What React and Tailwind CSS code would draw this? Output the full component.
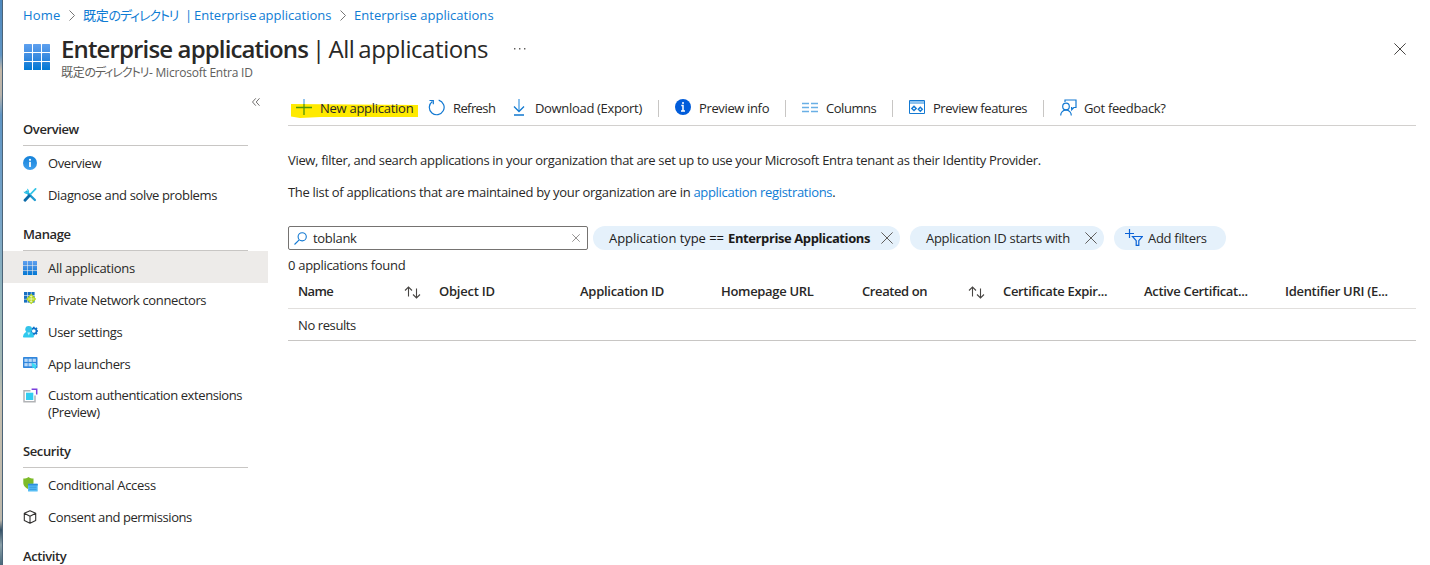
import React from "react";

const Grid = ({ size, id, className = "" }) => (
  <svg width={size} height={size} viewBox="0 0 26 26" className={className}>
    <defs>
      <linearGradient id={id} x1="0" y1="0" x2="0" y2="26" gradientUnits="userSpaceOnUse">
        <stop offset="0" stopColor="#5ea0ef" />
        <stop offset=".5" stopColor="#3a8be0" />
        <stop offset="1" stopColor="#0078d4" />
      </linearGradient>
    </defs>
    {[0, 9, 18].map((y) =>
      [0, 9, 18].map((x) => <rect key={x + "-" + y} x={x} y={y} width="8" height="8" rx=".5" fill={`url(#${id})`} />)
    )}
  </svg>
);

const InfoIcon = () => (
  <svg width="14" height="14" viewBox="0 0 14 14" className="-mt-px">
    <defs>
      <linearGradient id="info" x1="0" y1="0" x2="0" y2="1">
        <stop offset="0" stopColor="#1581d8" />
        <stop offset="1" stopColor="#3fa0ee" />
      </linearGradient>
    </defs>
    <circle cx="7" cy="7" r="7" fill="url(#info)" />
    <rect x="6.1" y="5.7" width="1.8" height="5.4" rx=".6" fill="#fff" />
    <circle cx="7" cy="3.8" r="1.1" fill="#fff" />
  </svg>
);

const ToolsIcon = () => (
  <svg width="14" height="14" viewBox="0 0 14 14" fill="none">
    <path d="M3.5 3.8 11.9 12" stroke="#1f9ad0" strokeWidth="2.4" strokeLinecap="round" />
    <path d="M3.9 0.6A3.300 3.300 0 0 1 5.8 5.200 3.300 3.300 0 0 1 .5 3.5L2.8 4.2 4.5 2.800Z" fill="#32c5e8" />
    <path d="M12.6 .9 6.6 7.1" stroke="#32c5e8" strokeWidth="1.7" strokeLinecap="round" />
    <path d="M6.2 7.700 2 12.2" stroke="#0a6aa8" strokeWidth="2.8" strokeLinecap="round" />
  </svg>
);

const ConnectorIcon = () => (
  <svg width="14" height="14" viewBox="0 0 14 14" className="-mt-0.5">
    {[0, 3.7, 7.4].map((y) => [1, 4.7, 8.4].map((x) => <rect key={x + "-" + y} x={x} y={y} width="3.200" height="3.200" fill="#176fc1" />))}
    <path d="M8.2 1.800 13.2 7 8.2 12.2 3.200 7Z" fill="#b4d81e" />
    <path d="M8.2 3.8v6.4M5.1 7h6.2M7.2 5 8.2 3.8 9.2 5M7.2 9l1 1.2 1-1.2" stroke="#fff" strokeWidth=".6" fill="none" />
  </svg>
);

const UserIcon = () => (
  <svg width="15" height="14" viewBox="0 0 15 14" className="-mt-px">
    <circle cx="10.8" cy="6" r="2.7" fill="none" stroke="#1071c8" strokeWidth="1.7" />
    <path d="M10.8 1.7v1.5M10.8 8.8v1.5M13.5 6H15M13 3.8l1-.9M13 8.2l1 .9" stroke="#1071c8" strokeWidth="1.7" />
    <path d="M0 11.6C.4 8.7 2.3 6.6 5.7 6.6s5.1 2.3 5.2 5c0 .7-.5 1-1.1 1H1C.3 12.600 0 12.200 0 11.600Z" fill="#30c9ee" />
    <circle cx="5.7" cy="4.3" r="3.4" fill="#34c3e9" />
    <path d="M4.300 7.500H7.200L5.800 10.500Z" fill="#b9f1fb" />
  </svg>
);

const LauncherIcon = () => (
  <svg width="15" height="13" viewBox="0 0 15 13" className="-mt-0.5">
    <rect width="14.500" height="11" rx=".8" fill="#3186dc" />
    {[1.7, 6.1].map((y) => [1.4, 5.5, 9.600].map((x) => <rect key={x + "-" + y} x={x} y={y} width="3.300" height="3.200" fill="#b9d9f8" />))}
    <path d="M8.8 5.600 14.600 9.100 12.500 9.600 13.300 12 11.900 12.500 10.900 10.200 9.500 11.500Z" fill="#3bdcf5" />
  </svg>
);

const ExtensionIcon = () => (
  <svg width="15" height="15" viewBox="0 0 15 15" fill="none">
    <path d="M7.500 2.700H1v11h11V7.500" stroke="#b1b3b6" strokeWidth="1.500" />
    <rect x="3" y="4.700" width="7.300" height="7.300" fill="#32cdf0" />
    <path d="M8.600 1.300h5.100v5.300" stroke="#7a3fdc" strokeWidth="1.500" />
  </svg>
);

const ShieldIcon = () => (
  <svg width="15" height="15" viewBox="0 0 15 15" className="-mt-px">
    <path d="M5.500 0C7 1.200 8.500 1.500 10.500 1.600V6c0 3-2.500 5-5 6.200C3 11 .3 9 .3 6V1.600C2.500 1.500 4 1.200 5.500 0Z" fill="#7dbb2a" />
    <rect x="5" y="6.800" width="9.700" height="7.600" rx=".5" fill="#57bdf4" />
    <rect x="5" y="6.800" width="9.700" height="1.700" fill="#2e8ddd" />
    <path d="M6.300 10.200h7.200M6.300 12.300h7.200" stroke="#2d8ed9" strokeWidth=".8" />
  </svg>
);

const CubeIcon = () => (
  <svg width="14" height="14" viewBox="0 0 14 14" fill="none" stroke="#323130" strokeWidth="1.1" strokeLinejoin="round" className="-mt-px">
    <path d="M7 .8 12.700 3.200v7.300L7 13.200 1.300 10.500V3.200ZM1.300 3.200 7 6.200l5.700-3M7 6.200v7" />
  </svg>
);

const Cross = ({ size, className = "" }) => (
  <svg width={size} height={size} viewBox="0 0 12 12" className={"shrink-0 " + className}>
    <path d="M.4.4 11.600 11.600M11.600.4.4 11.600" stroke="currentColor" strokeWidth="1" />
  </svg>
);

const Sort = () => (
  <svg width="17" height="13" viewBox="0 0 17 13" fill="none" stroke="#484644" strokeWidth="1.100" className="mt-0.5 shrink-0">
    <path d="M4.500 10.500V1M1 4.500 4.500 1 8 4.500M12.500 2.500v9.500M9 8.500l3.500 3.500L16 8.500" />
  </svg>
);

const Chevron = () => (
  <svg width="6" height="11" viewBox="0 0 6 11" fill="none" stroke="#767676" className="shrink-0">
    <path d="M.5.500 5.500 5.500.500 10.500" />
  </svg>
);

const DirectoryName = () => (
  <span className="[font-feature-settings:'palt']">
    <span className="tracking-[-0.3px]">既定</span>
    <span className="tracking-[-1.1px]">のディレクトリ</span>
  </span>
);

const Heading = ({ children }) => (
  <div className="ml-5 mr-5 flex h-10 items-end border-b border-[#c8c6c4] pb-[7px] font-semibold leading-[18px]">
    <span className="tracking-[-0.4px]">{children}</span>
  </div>
);

const Item = ({ icon, children, active, low, track }) => (
  <div className={"flex h-8 items-center pl-5 " + (active ? "bg-[#edebe9] " : "") + (low ? "pt-0.5" : "")}>
    <span className="flex w-[25px] shrink-0 items-center">{icon}</span>
    <span className={track}>{children}</span>
  </div>
);

const Divider = () => <span className="h-[17px] w-px shrink-0 bg-[#c8c6c4]" />;

const Tool = ({ w, icon, iw, children, track }) => (
  <div className={"flex h-[18px] shrink-0 items-center " + w}>
    <span className={"-mt-0.5 flex shrink-0 items-center " + iw}>{icon}</span>
    <span className={"relative " + track}>{children}</span>
  </div>
);

const columns = [
  ["Name", true, "tracking-[-0.6px]"],
  ["Object ID", false, "tracking-[-0.25px]"],
  ["Application ID", false, "tracking-[-0.27px]"],
  ["Homepage URL", false, "tracking-[-0.32px]"],
  ["Created on", true, "tracking-[-0.4px]"],
  ["Certificate Expir...", false, "tracking-[-0.33px]"],
  ["Active Certificat...", false, "tracking-[-0.31px]"],
  ["Identifier URI (E...", false, "tracking-[-0.3px]"],
];

export default function App() {
  return (
    <div className="flex h-[565px] w-[1430px] overflow-hidden whitespace-nowrap bg-white font-['Open_Sans','Noto_Sans_CJK_JP',sans-serif] text-[13px] leading-[18px] text-[#292827]">
      <div className="w-[3px] shrink-0 border-r border-[#4c6478] bg-[linear-gradient(to_bottom,#4d88bd_0,#6095c4_55px,#c4b8a8_70px,#b9b4ac_95px,#5f95c4_115px,#78a5c8_220px,#93b5bb_300px,#a5b8b4_370px,#c5bfaf_400px,#bdb8ac_520px,#355166_530px,#8ba0a8_545px,#48687a_565px)]" />
      <div className="flex w-[1427px] flex-col">
        <nav className="flex h-[30px] shrink-0 items-center pl-5 text-[#0f7cd4]">
          <span className="w-[46px] tracking-[0.2px]">Home</span>
          <Chevron />
          <span className="ml-2 flex w-[257px]">
            <span className="w-[102px]"><DirectoryName /></span>
            <span className="[word-spacing:-1.5px]">| Enterprise applications</span>
          </span>
          <Chevron />
          <span className="ml-2 tracking-[0.03px]">Enterprise applications</span>
        </nav>
        <header className="flex h-[61px] shrink-0 pl-[21px]">
          <Grid size={26} id="g1" className="mt-[14px] shrink-0" />
          <div className="ml-[11px] w-[453px]">
            <h1 className="mt-1 text-2xl leading-[30px]">
              <span className="font-semibold tracking-[-0.86px]">Enterprise applications</span>
              <span className="tracking-[-0.42px] [word-spacing:-2px]"> | All applications</span>
            </h1>
            <p className="mt-0.5 flex text-xs leading-[14px] text-[#605e5c]">
              <span className="w-[88px]"><DirectoryName /></span>
              <span className="tracking-[-0.22px]">- Microsoft Entra ID</span>
            </p>
          </div>
          <svg width="12" height="3" viewBox="0 0 12 3" className="mt-[17px] fill-[#605e5c]"><path d="M0 1h1.400v1.400H0zM5 1h1.400v1.400H5zM10 1h1.400v1.400H10z" /></svg>
          <Cross size={12} className="ml-auto mr-6 mt-[13px] text-[#484644]" />
        </header>
        <div className="flex">
          <aside className="w-[265px] shrink-0">
            <div className="flex h-[15px] justify-end pr-2 pt-[7px]">
              <svg width="8" height="8" viewBox="0 0 8 8" fill="none" stroke="#605e5c" strokeWidth=".9"><path d="M3.800.300.500 4l3.300 3.700M7.500.300 4.200 4l3.300 3.700" /></svg>
            </div>
            <Heading>Overview</Heading>
            <div className="mt-px">
              <Item icon={<InfoIcon />} track="tracking-[-0.4px]">Overview</Item>
              <Item icon={<ToolsIcon />} track="tracking-[-0.35px]">Diagnose and solve problems</Item>
            </div>
            <Heading>Manage</Heading>
            <Item low icon={<Grid size={14} id="g2" />} active track="tracking-[-0.27px]">All applications</Item>
            <Item low icon={<ConnectorIcon />} track="tracking-[-0.38px]">Private Network connectors</Item>
            <Item low icon={<UserIcon />} track="tracking-[-0.35px]">User settings</Item>
            <Item low icon={<LauncherIcon />} track="tracking-[-0.35px]">App launchers</Item>
            <div className="flex h-[49px] pl-5 pt-2">
              <span className="w-[25px] shrink-0 pt-px"><ExtensionIcon /></span>
              <span className="leading-[17px] tracking-[-0.41px]">Custom authentication extensions<br />(Preview)</span>
            </div>
            <Heading>Security</Heading>
            <div className="mt-px">
              <Item icon={<ShieldIcon />} track="tracking-[-0.3px]">Conditional Access</Item>
              <Item icon={<CubeIcon />} track="tracking-[-0.42px]">Consent and permissions</Item>
            </div>
            <Heading>Activity</Heading>
          </aside>
          <main className="ml-5 w-[1128px]">
            <div className="relative flex h-[35px] items-center border-b border-[#d2d0ce]">
              <svg width="130" height="16" viewBox="0 0 130 16" className="absolute left-[3px] top-[12px]"><path d="M0 1 127 2V14L30 14 9 15 0 13.500Z" fill="#ffea00" /></svg>
              <Tool w="w-[141px] pl-2" iw="w-6 relative" track="tracking-[-0.27px]" icon={<svg width="16" height="16" viewBox="0 0 16 16" fill="none" strokeWidth="1.300"><path d="M8 0v5" stroke="#5ea8e6" /><path d="M8 5v11M0 8.500h16" stroke="#4f940c" /></svg>}>New application</Tool>
              <Tool w="w-[83px]" iw="w-6" track="tracking-[-0.6px]" icon={<svg width="17" height="17" viewBox="0 0 17 17" fill="none" stroke="#1379d2" strokeWidth="1.200" className="-ml-px"><path d="M10.700 1.200A7.400 7.400 0 1 1 4.300 2.400M1.500 1.500h3.800v3.700" /></svg>}>Refresh</Tool>
              <Tool w="w-[146px]" iw="w-[23px] pl-px" track="tracking-[-0.32px]" icon={<svg width="12" height="17" viewBox="0 0 12 17" fill="none" strokeWidth="1.300"><path d="M6 0v12" stroke="#4c9fe3" /><path d="m1 7.500 5 5 5-5M1 16h10" stroke="#1078d0" /></svg>}>Download (Export)</Tool>
              <Divider />
              <Tool w="w-[126px] pl-4" iw="w-6" track="tracking-[-0.36px]" icon={<svg width="16" height="16" viewBox="0 0 16 16"><circle cx="8" cy="8" r="8" fill="#015cda" /><path d="M8 3v2M6.300 6.500H8V12M6 12h4" stroke="#fff" strokeWidth="1.500" fill="none" /></svg>}>Preview info</Tool>
              <Divider />
              <Tool w="w-[106px] pl-4" iw="w-6" track="tracking-[-0.45px]" icon={<svg width="16" height="11" viewBox="0 0 16 11" stroke="#69afe5" strokeWidth="1.500"><path d="M0 1.500h7M9 1.500h7M0 5.500h7M9 5.500h7M0 9.500h7M9 9.500h7" /></svg>}>Columns</Tool>
              <Divider />
              <Tool w="w-[150px] pl-4" iw="w-6" track="tracking-[-0.45px]" icon={<svg width="16" height="14" viewBox="0 0 16 14" fill="none"><path d="M.500.500h15v13H.500Z" stroke="#1379d2" /><path d="M1 2.500h14" stroke="#8dc2ee" strokeWidth="3" /><path d="m5 6.200 2.200 2.200L5 10.600 2.800 8.400ZM11.300 7.200l2 2-2 2-2-2Z" stroke="#1379d2" strokeWidth="1.400" /></svg>}>Preview features</Tool>
              <Divider />
              <Tool w="pl-4" iw="w-6" track="tracking-[-0.35px]" icon={<svg width="17" height="17" viewBox="0 0 17 17" fill="none" stroke="#1379d2" strokeWidth="1.200"><circle cx="6" cy="7.500" r="3.300" /><path d="M.700 16.500A5.500 5.500 0 0 1 6 10.900a5.500 5.500 0 0 1 5.300 5.600M5 3V1h11v7.500h-2.200l-2.100 2.200V8.500H11" /></svg>}>Got feedback?</Tool>
            </div>
            <p className="mt-[25px] tracking-[-0.324px]">View, filter, and search applications in your organization that are set up to use your Microsoft Entra tenant as their Identity Provider.</p>
            <p className="mt-3.5 tracking-[-0.305px]">The list of applications that are maintained by your organization are in <a className="text-[#0f7cd4]">application registrations</a>.</p>
            <div className="mt-[25px] flex h-6">
              <div className="flex w-[300px] shrink-0 items-center rounded-[2px] border border-[#757371] pl-[5px] pr-[7px]">
                <svg width="13" height="13" viewBox="0 0 13 13" fill="none" stroke="#1379d2" strokeWidth="1.100" className="mr-[6px]"><circle cx="8.200" cy="4.800" r="4.100" /><path d="M5.200 7.800.500 12.500" /></svg>
                <span className="tracking-[-0.3px]">toblank</span>
                <Cross size={8} className="ml-auto text-[#605e5c]" />
              </div>
              <div className="ml-[5px] flex w-[307px] shrink-0 items-center rounded-full bg-[#e5f1fb] pl-4 pr-[7px] text-[#1b1a19]">
                <span className="w-[119px] tracking-[-0.05px]">Application type ==</span>
                <b className="font-bold tracking-[-0.4px]">Enterprise Applications</b>
                <Cross size={12} className="ml-auto text-[#605e5c]" />
              </div>
              <div className="ml-2.5 flex w-[194px] shrink-0 items-center rounded-full bg-[#e5f1fb] pl-4 pr-[7px]">
                <span className="tracking-[-0.28px]">Application ID starts with</span>
                <Cross size={12} className="ml-auto text-[#605e5c]" />
              </div>
              <div className="ml-2.5 flex w-[112px] shrink-0 items-center rounded-full bg-[#e5f1fb] pl-[11px]">
                <svg width="18" height="17" viewBox="0 0 18 17" fill="none" stroke="#0b62d6" strokeWidth="1.200" className="-mt-px mr-[5px]"><path d="M4.500 0v9M0 4.500h9M7.500 7.500h10l-3.700 4.200v4.700h-2.600v-4.700Z" /></svg>
                <span className="tracking-[-0.3px]">Add filters</span>
              </div>
            </div>
            <p className="mt-1.5 tracking-[-0.3px]">0 applications found</p>
            <div className="flex h-[35px] border-b border-[#e1dfdd]">
              {columns.map(([name, sortable, track]) => (
                <div key={name} className="flex w-[141px] shrink-0 items-center pl-2.5 pr-2 font-semibold">
                  <span className={track}>{name}</span>
                  {sortable && <span className="ml-auto"><Sort /></span>}
                </div>
              ))}
            </div>
            <div className="flex h-8 items-center border-b border-[#c8c6c4] pl-2.5 tracking-[-0.4px]">No results</div>
          </main>
        </div>
      </div>
    </div>
  );
}
